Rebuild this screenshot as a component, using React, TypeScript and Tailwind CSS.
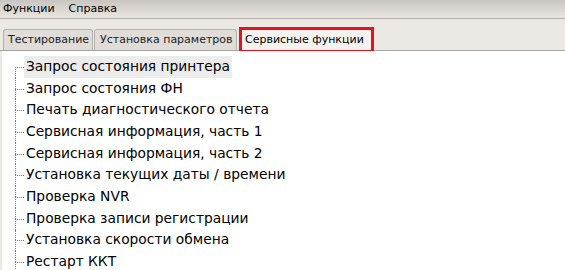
import React from "react";

const items = [
  "Запрос состояния принтера",
  "Запрос состояния ФН",
  "Печать диагностического отчета",
  "Сервисная информация, часть 1",
  "Сервисная информация, часть 2",
  "Установка текущих даты / времени",
  "Проверка NVR",
  "Проверка записи регистрации",
  "Установка скорости обмена",
  "Рестарт ККТ",
];

export default function App() {
  return (
    <div
      className="w-[565px] h-[270px] overflow-hidden bg-[#ece9e5] flex flex-col text-black"
      style={{ fontFamily: '"DejaVu Sans", Verdana, sans-serif' }}
    >
      <div className="h-[19px] shrink-0 flex items-center gap-[14px] px-[3px] text-[11px] bg-gradient-to-b from-[#c9c5c1] to-[#e9e6e2] border-b border-[#b3afab]">
        <span>Функции</span>
        <span>Справка</span>
      </div>
      <div className="h-[32px] shrink-0 flex items-end pl-[3px] border-b border-[#a8a4a0] whitespace-nowrap">
        <div className="h-[21px] w-[90px] flex items-center pl-[4px] text-[11px] text-[#202020] bg-[#e0ddd9] border border-b-0 border-[#b5b1ad] rounded-t-[3px]">
          Тестирование
        </div>
        <div className="h-[21px] w-[143px] ml-[1px] flex items-center pl-[5px] text-[11px] text-[#202020] bg-[#e0ddd9] border border-b-0 border-[#b5b1ad] rounded-t-[3px]">
          Установка параметров
        </div>
        <div className="h-[26px] w-[135px] ml-[2px] mb-[-3px] flex items-center pl-[3px] text-[11px] bg-[#f5f3f0] border-[3px] border-[#e3141b]">
          Сервисные функции
        </div>
      </div>
      <div className="flex-1 bg-white ml-[2px] pt-[5px]">
        {items.map((t, i) => (
          <div key={t} className="h-[21.7px] flex items-stretch whitespace-nowrap">
            <div className="ml-[13px] w-[9px] flex flex-col">
              <div className={"h-1/2 " + (i === 0 ? "" : "border-l border-dotted border-[#7a7a7a]")} />
              <div className="h-1/2 border-l border-t border-dotted border-[#7a7a7a]" />
            </div>
            <div
              className={
                "flex items-center px-[2px] text-[13.8px] leading-none " +
                (i === 0 ? "bg-[#ececec]" : "")
              }
            >
              {t}
            </div>
          </div>
        ))}
      </div>
    </div>
  );
}
